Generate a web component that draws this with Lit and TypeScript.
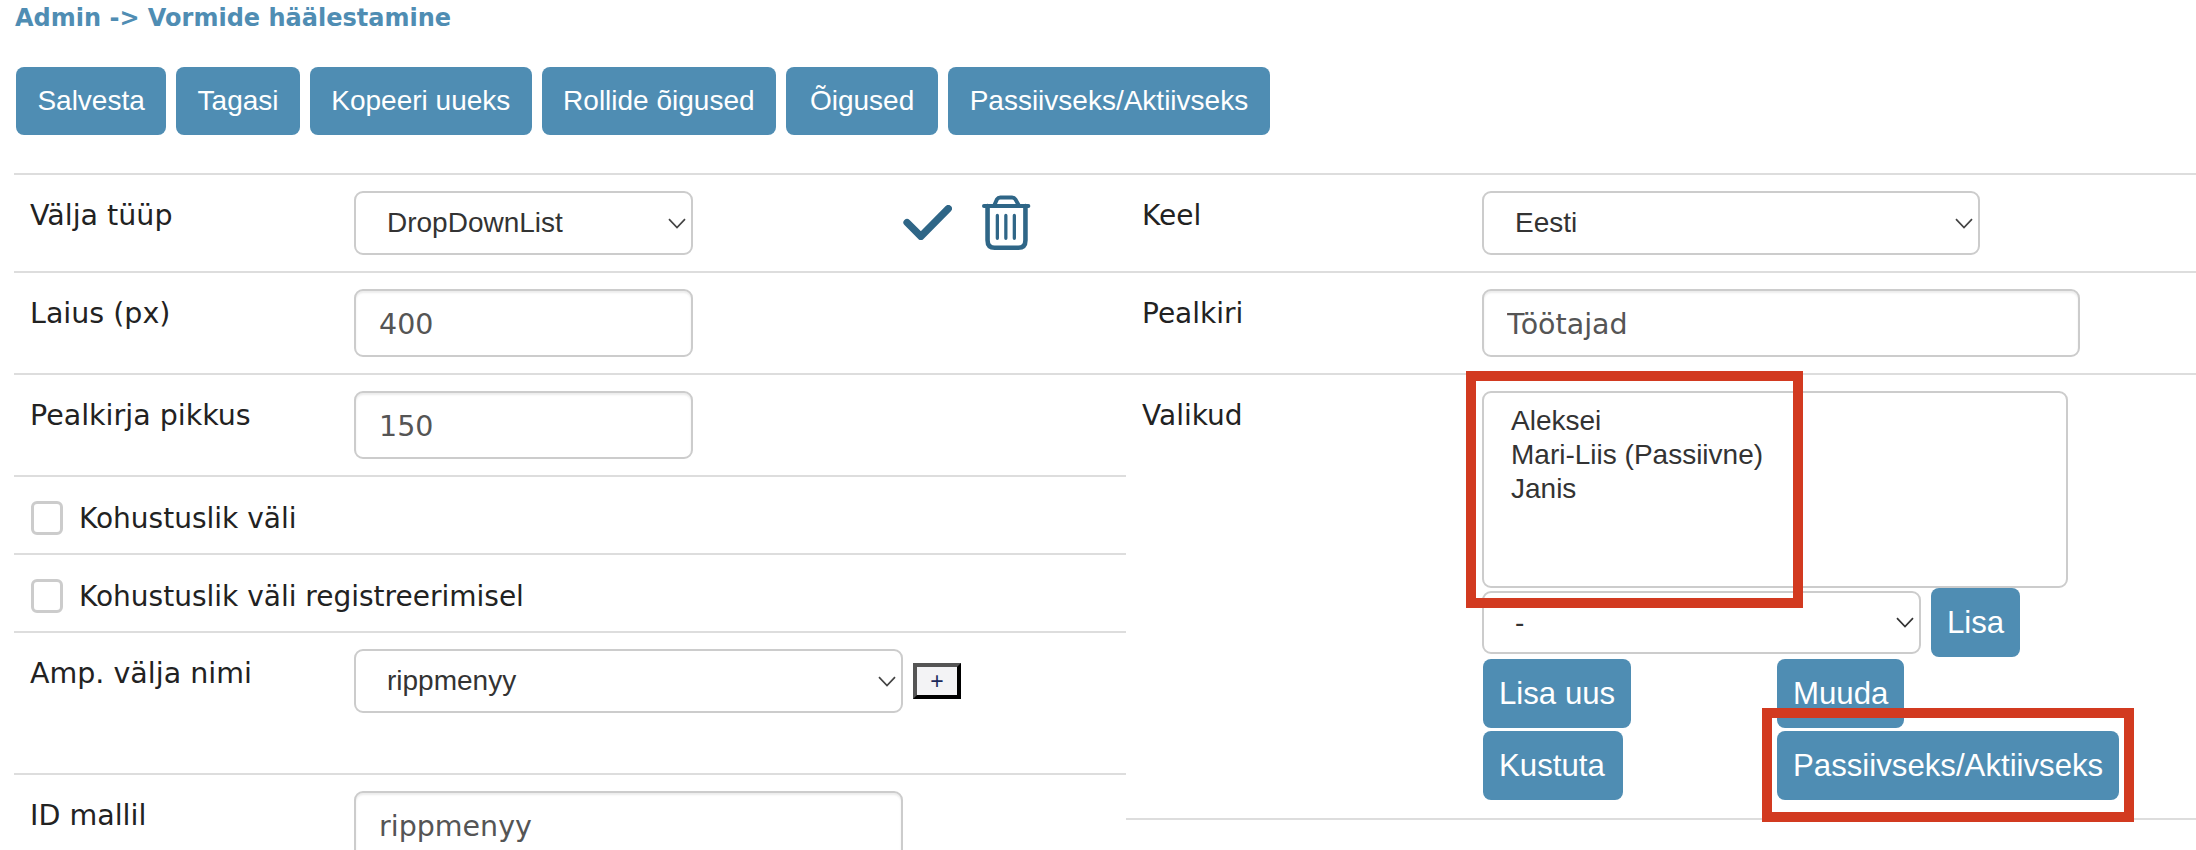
import { LitElement, html, css } from "lit";
import { customElement } from "lit/decorators.js";

const chevron = html`<svg class="chev" viewBox="0 0 18 11" width="18" height="11" aria-hidden="true"><path d="M1 1.2 L9 9.5 L17 1.2" fill="none" stroke="currentColor" stroke-width="1.7"/></svg>`;

@customElement("app-root")
export class AppRoot extends LitElement {
  static styles = css`
    :host { display: block; position: relative; height: 850px; width: 2196px; overflow: hidden; background: #fff; font-family: "DejaVu Sans", Verdana, sans-serif; color: #222; }
    .title { height: 36px; line-height: 36px; padding-left: 15px; font-weight: 700; font-size: 24px; color: #4f8db3; }
    .toolbar { display: flex; gap: 10px; margin: 31px 0 38px 16px; }
    button.btn { box-sizing: border-box; height: 68px; padding: 0 21.4px; border: none; border-radius: 8px; background: #4f8db3; color: #fff; font-family: "Liberation Sans", Arial, sans-serif; font-size: 28px; white-space: nowrap; }
    .toolbar button.btn:nth-child(5) { padding: 0 24px; }
    .main { display: grid; grid-template-columns: 1112px 1070px; margin-left: 14px; border-top: 2px solid #ddd; }
    .row { display: flex; align-items: flex-start; border-bottom: 2px solid #ddd; padding: 16px 0; box-sizing: border-box; }
    .left .row:last-child { border-bottom: none; }
    .label { width: 324px; margin-left: 16px; flex: none; margin-top: 8px; font-size: 28.5px; line-height: 34px; }
    .right .label { width: 340px; margin-left: 16px; font-size: 28px; }
    .select { box-sizing: border-box; display: flex; align-items: center; justify-content: space-between; height: 64px; border: 2px solid #ccc; border-radius: 9px; background: #fff; padding: 0 5px 0 31px; font-family: "Liberation Sans", Arial, sans-serif; font-size: 28px; color: #333; }
    .chev { color: #444; flex: none; }
    .input { box-sizing: border-box; display: block; height: 68px; padding: 2px 23px 0; border: 2px solid #ccc; border-radius: 9px; box-shadow: inset 0 2px 2px rgba(0,0,0,.08); font-family: "DejaVu Sans", Verdana, sans-serif; font-size: 28.5px; color: #555; background: #fff; outline: none; }
    .w339 { width: 339px; }
    .w549 { width: 549px; }
    .w498 { width: 498px; }
    .w598 { width: 598px; }
    .icons { display: flex; align-items: center; margin-left: 210px; gap: 30px; height: 63px; }
    .icons svg { display: block; }
    .check { height: 78px; align-items: center; padding: 6px 0 0 17px; gap: 16px; font-size: 28px; }
    .box { box-sizing: border-box; width: 32px; height: 34px; border: 3px solid #ccc; border-radius: 6px; background: #fff; flex: none; }
    .amp { height: 142px; }
    .plus { box-sizing: border-box; width: 48px; height: 36px; margin: 14px 0 0 10px; padding: 0; border: 4px solid; border-color: #555 #000 #000 #555; background: #f3f3f5; color: #1c2a5a; font-family: "Liberation Sans", Arial, sans-serif; font-size: 23px; line-height: 26px; }
    .field { display: flex; flex-direction: column; }
    .list { box-sizing: border-box; width: 586px; height: 197px; border: 2px solid #ccc; border-radius: 9px; padding: 11px 27px; font-family: "Liberation Sans", Arial, sans-serif; font-size: 28px; line-height: 34px; color: #333; }
    .addline { display: flex; gap: 10px; align-items: flex-start; }
    .addline .select { width: 439px; height: 63px; margin-top: 3px; }
    .addline .chev { color: #333; }
    .actions { display: grid; grid-template-columns: 294px auto; justify-items: start; row-gap: 3px; margin: 2px 0 0 1px; }
    .actions button.btn, .addline button.btn { height: 69px; padding: 0 16px; font-size: 31.2px; }
    .actions button.btn:nth-child(3) { padding: 0 18px 0 16px; }
    .valikud { height: 445px; }
    .mark { position: absolute; box-sizing: border-box; border: 10px solid #d23a20; pointer-events: none; }
    .mark.one { left: 1466px; top: 371px; width: 337px; height: 237px; }
    .mark.two { left: 1762px; top: 708px; width: 372px; height: 114px; }
  `;

  render() {
    return html`
      <div class="title">Admin -&gt; Vormide häälestamine</div>
      <div class="toolbar">
        ${["Salvesta", "Tagasi", "Kopeeri uueks", "Rollide õigused", "Õigused", "Passiivseks/Aktiivseks"].map(
          (t) => html`<button class="btn">${t}</button>`
        )}
      </div>
      <div class="main">
        <div class="left">
          <div class="row">
            <div class="label">Välja tüüp</div>
            <div class="select w339"><span>DropDownList</span>${chevron}</div>
            <div class="icons">
              <svg viewBox="0 0 148 106" width="49" height="35" aria-hidden="true"><path d="M12 53 L54 95 L137 11" fill="none" stroke="#2f6687" stroke-width="22" stroke-linecap="round" stroke-linejoin="round"/></svg>
              <svg viewBox="0 0 150 170" width="49" height="56" aria-hidden="true" fill="none" stroke="#2f6687" stroke-linecap="round">
                <path d="M6 33 H142" stroke-width="12"/>
                <path d="M38 30 L46 12 Q49 7 56 7 H92 Q99 7 102 12 L112 30" stroke-width="12"/>
                <path d="M17 33 V138 Q17 161 39 161 H111 Q133 161 133 138 V33" stroke-width="14"/>
                <path d="M47 62 V132 M73 62 V132 M99 62 V132" stroke-width="10"/>
              </svg>
            </div>
          </div>
          <div class="row"><div class="label">Laius (px)</div><input class="input w339" .value=${"400"} /></div>
          <div class="row"><div class="label">Pealkirja pikkus</div><input class="input w339" .value=${"150"} /></div>
          <div class="row check"><span class="box"></span><span>Kohustuslik väli</span></div>
          <div class="row check"><span class="box"></span><span>Kohustuslik väli registreerimisel</span></div>
          <div class="row amp">
            <div class="label">Amp. välja nimi</div>
            <div class="select w549"><span>rippmenyy</span>${chevron}</div>
            <button class="plus">+</button>
          </div>
          <div class="row"><div class="label">ID mallil</div><input class="input w549" .value=${"rippmenyy"} /></div>
        </div>
        <div class="right">
          <div class="row">
            <div class="label">Keel</div>
            <div class="select w498"><span>Eesti</span>${chevron}</div>
          </div>
          <div class="row">
            <div class="label">Pealkiri</div>
            <input class="input w598" .value=${"Töötajad"} />
          </div>
          <div class="row valikud">
            <div class="label">Valikud</div>
            <div class="field">
              <div class="list"><div>Aleksei</div><div>Mari-Liis (Passiivne)</div><div>Janis</div></div>
              <div class="addline">
                <div class="select"><span>-</span>${chevron}</div>
                <button class="btn">Lisa</button>
              </div>
              <div class="actions">
                <button class="btn">Lisa uus</button>
                <button class="btn">Muuda</button>
                <button class="btn">Kustuta</button>
                <button class="btn">Passiivseks/Aktiivseks</button>
              </div>
            </div>
          </div>
        </div>
      </div>
      <div class="mark one"></div>
      <div class="mark two"></div>
    `;
  }
}
